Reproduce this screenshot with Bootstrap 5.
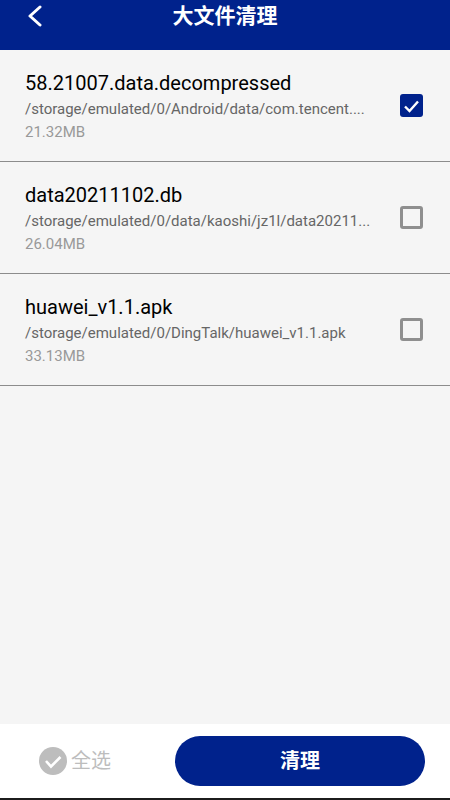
<!DOCTYPE html>
<html lang="zh">
<head>
<meta charset="utf-8">
<title>大文件清理</title>
<link href="https://cdn.jsdelivr.net/npm/bootstrap@5.3.0/dist/css/bootstrap.min.css" rel="stylesheet">
<style>
html,body{height:100%;}
body{font-family:Roboto,"Noto Sans CJK SC",sans-serif;background:#f5f5f5;overflow:hidden;}
.app-shell{height:800px;}
.top-bar{height:50px;background:#00228c;padding:0 25px;}
.top-bar .back-btn{position:absolute;left:27px;top:5px;line-height:0;}
.top-bar-title{font-size:21px;font-weight:700;line-height:20px;margin-top:6px;color:#fff;}
.file-row{height:112px;padding:0 27px 0 25px;border-bottom:1px solid #8c8c8c;background:#f5f5f5;}
.file-info{width:345px;}
.file-name{font-size:20px;line-height:26px;color:#000;}
.file-path{font-size:15px;line-height:26px;color:#666;white-space:nowrap;}
.file-size{font-size:15px;line-height:20px;color:#999;}
.file-main{padding-top:20px;}
.check-box{width:23px;height:23px;border-radius:3px;flex:none;}
.check-on{background:#00228c;}
.check-off{border:3px solid #8f8f8f;}
.foot-bar{height:74px;background:#fff;padding:0 25px 0 39px;}
.select-all{font-size:20px;line-height:28px;color:#bdbdbd;}
.clear-btn{width:250px;height:50px;border-radius:25px;background:#00228c;color:#fff;font-weight:700;font-size:20px;border:0;padding:0;}
.clear-btn:hover{background:#00228c;color:#fff;}
.bottom-edge{height:2px;background:#1c1c1c;}
</style>
</head>
<body>
<div class="app-shell d-flex flex-column">
  <div class="top-bar position-relative text-center flex-none">
    <span class="back-btn"><svg width="16" height="22" viewBox="0 0 16 22"><path d="M13 2 L3 11 L13 20" fill="none" stroke="#fff" stroke-width="3" stroke-linecap="round" stroke-linejoin="round"/></svg></span>
    <div class="top-bar-title">大文件清理</div>
  </div>
  <div class="flex-grow-1">
    <div class="file-row d-flex align-items-center justify-content-between">
      <div class="file-info align-self-start file-main">
        <div class="file-name">58.21007.data.decompressed</div>
        <div class="file-path">/storage/emulated/0/Android/data/com.tencent....</div>
        <div class="file-size">21.32MB</div>
      </div>
      <div class="check-box check-on d-flex align-items-center justify-content-center"><svg width="17" height="14" viewBox="0 0 17 14"><path d="M2 7.5 L6.5 12 L15 2.5" fill="none" stroke="#fff" stroke-width="2.4"/></svg></div>
    </div>
    <div class="file-row d-flex align-items-center justify-content-between">
      <div class="file-info align-self-start file-main">
        <div class="file-name">data20211102.db</div>
        <div class="file-path">/storage/emulated/0/data/kaoshi/jz1l/data20211...</div>
        <div class="file-size">26.04MB</div>
      </div>
      <div class="check-box check-off"></div>
    </div>
    <div class="file-row d-flex align-items-center justify-content-between">
      <div class="file-info align-self-start file-main">
        <div class="file-name">huawei_v1.1.apk</div>
        <div class="file-path">/storage/emulated/0/DingTalk/huawei_v1.1.apk</div>
        <div class="file-size">33.13MB</div>
      </div>
      <div class="check-box check-off"></div>
    </div>
  </div>
  <div class="foot-bar d-flex align-items-center justify-content-between">
    <div class="select-all d-flex align-items-center gap-1">
      <svg width="28" height="28" viewBox="0 0 28 28"><circle cx="14" cy="14" r="14" fill="#bdbdbd"/><path d="M7 14 L12 19.5 L21.5 10" fill="none" stroke="#fff" stroke-width="2.6"/></svg>
      <span>全选</span>
    </div>
    <button type="button" class="btn clear-btn">清理</button>
  </div>
  <div class="bottom-edge"></div>
</div>
<script src="https://cdn.jsdelivr.net/npm/bootstrap@5.3.0/dist/js/bootstrap.bundle.min.js"></script>
</body>
</html>
